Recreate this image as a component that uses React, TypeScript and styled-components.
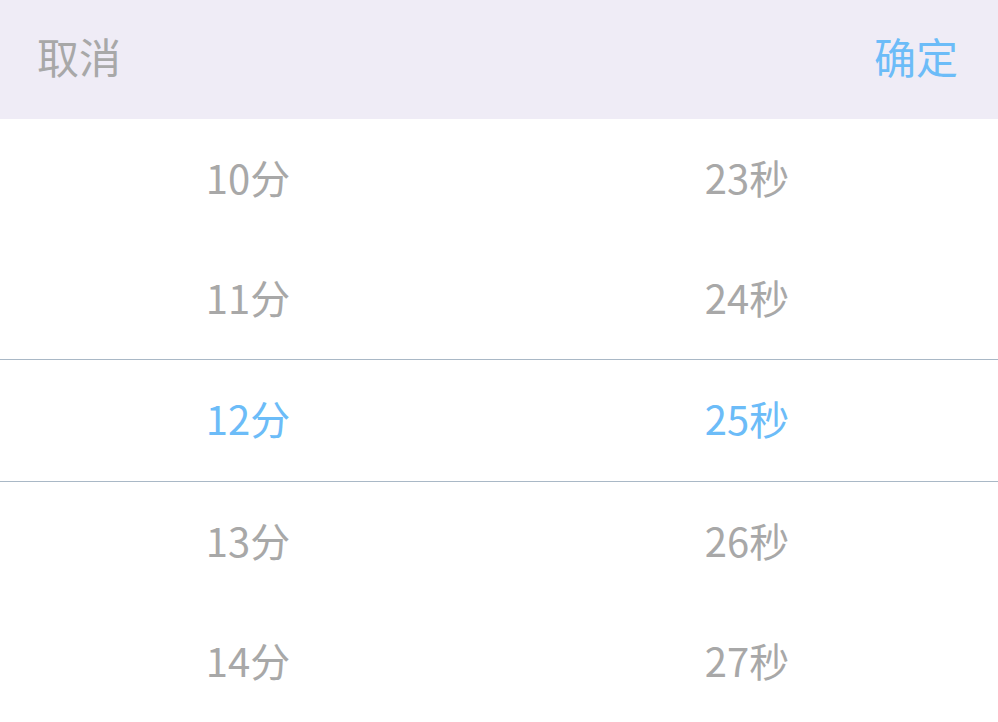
import React from "react";
import styled, { createGlobalStyle } from "styled-components";

const Global = createGlobalStyle`
  html, body { margin: 0; padding: 0; background: #ffffff; }
  body { font-family: "Noto Sans CJK SC", "Noto Sans", sans-serif; }
`;

const Page = styled.div`
  width: 998px;
  height: 722px;
  overflow: hidden;
  background: #ffffff;
  display: flex;
  flex-direction: column;
`;

const Toolbar = styled.div`
  height: 119px;
  flex: none;
  background: #efecf6;
  display: flex;
  align-items: center;
  justify-content: space-between;
  padding: 0 40px 0 37px;
`;

const ToolButton = styled.span<{ $primary?: boolean }>`
  font-size: 42px;
  line-height: 1;
  color: ${(p) => (p.$primary ? "#6cbcf8" : "#a8a8a8")};
  padding-bottom: 7px;
`;

const Wheel = styled.div`
  display: flex;
  flex-direction: column;
`;

const Row = styled.div<{ $selected?: boolean }>`
  display: grid;
  grid-template-columns: 1fr 1fr;
  height: ${(p) => (p.$selected ? "121px" : "120px")};
  border-top: ${(p) => (p.$selected ? "1px solid #a9b8c6" : "none")};
  border-bottom: ${(p) => (p.$selected ? "1px solid #a9b8c6" : "none")};
`;

const Cell = styled.div<{ $selected?: boolean }>`
  display: flex;
  align-items: center;
  justify-content: center;
  font-size: 40px;
  line-height: 1;
  padding-bottom: 5px;
  padding-right: 3px;
  color: ${(p) => (p.$selected ? "#6cbcf8" : "#a8a8a8")};
`;

const rows = [
  ["10分", "23秒"],
  ["11分", "24秒"],
  ["12分", "25秒"],
  ["13分", "26秒"],
  ["14分", "27秒"],
];

export default function App() {
  return (
    <Page>
      <Global />
      <Toolbar>
        <ToolButton>取消</ToolButton>
        <ToolButton $primary>确定</ToolButton>
      </Toolbar>
      <Wheel>
        {rows.map((r, i) => (
          <Row key={i} $selected={i === 2}>
            <Cell $selected={i === 2}>{r[0]}</Cell>
            <Cell $selected={i === 2}>{r[1]}</Cell>
          </Row>
        ))}
      </Wheel>
    </Page>
  );
}
